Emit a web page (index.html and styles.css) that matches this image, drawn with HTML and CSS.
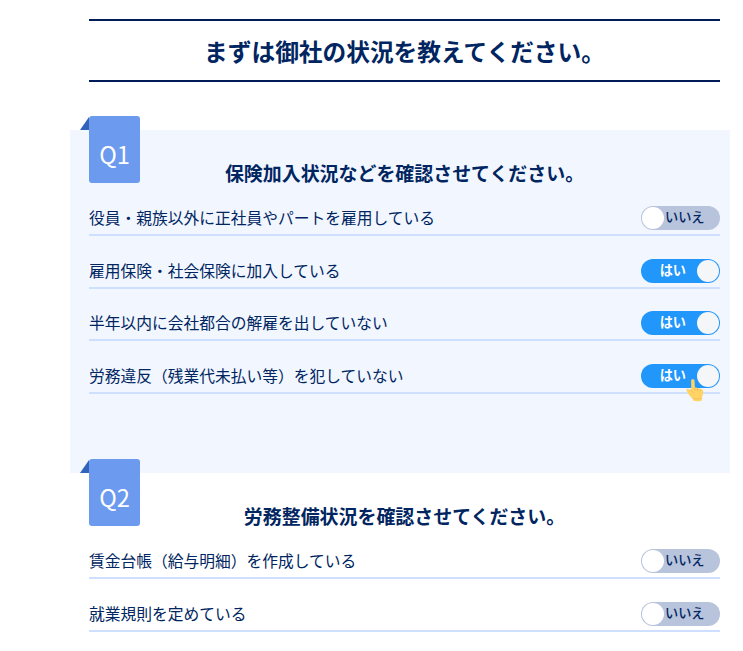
FILE: index.html
```html
<!DOCTYPE html>
<html lang="ja">
<head>
    <meta charset="UTF-8">
    <meta name="viewport" content="width=device-width, initial-scale=1.0">
    <title>御社の状況確認</title>
    <link rel="stylesheet" href="styles.css">
</head>
<body>

    <main class="container">
        <h1 class="page-title">まずは御社の状況を教えてください。</h1>

        <section class="question question-tinted">
            <div class="label"><span>Q1</span></div>
            <h2>保険加入状況などを確認させてください。</h2>
            <ul class="list">
                <li>
                    <p>役員・親族以外に正社員やパートを雇用している</p>
                    <div class="toggle"><span>いいえ</span></div>
                </li>
                <li>
                    <p>雇用保険・社会保険に加入している</p>
                    <div class="toggle on"><span>はい</span></div>
                </li>
                <li>
                    <p>半年以内に会社都合の解雇を出していない</p>
                    <div class="toggle on"><span>はい</span></div>
                </li>
                <li>
                    <p>労務違反（残業代未払い等）を犯していない</p>
                    <div class="toggle on"><span>はい</span>
                        <svg class="pointer" width="19" height="24" viewBox="0 0 19 24">
                            <path fill="#ffd465" d="M5.200 2.200C5.200.9 8.400.9 8.500 2.200l.4 7.400 2 .2.500.500 2 .1.500.600 1.700.2c1.200.4 1.600 1.200 1.600 2.400 0 2-.1 4-1.400 5.600v3.200c-2.800 1.100-6 1.100-8.800.1l-.2-2C4.200 18.700 1.500 15.500.500 12.500c-.4-1.500.9-2.200 2.200-1.500l2.500 1.500z"/>
                            <path fill="none" stroke="#f2b65b" stroke-width=".8" stroke-linecap="round" d="M8.900 9.600v3M11.500 10.300v2.500M14 11v2M4.800 11.500c.4 1.600 1.300 2.700 2.700 3.300M6.800 20.300c3 1 6 1 9-.2"/>
                        </svg>
                    </div>
                </li>
            </ul>
        </section>

        <section class="question">
            <div class="label"><span>Q2</span></div>
            <h2>労務整備状況を確認させてください。</h2>
            <ul class="list">
                <li>
                    <p>賃金台帳（給与明細）を作成している</p>
                    <div class="toggle"><span>いいえ</span></div>
                </li>
                <li>
                    <p>就業規則を定めている</p>
                    <div class="toggle"><span>いいえ</span></div>
                </li>
            </ul>
        </section>
    </main>

</body>
</html>
```
FILE: styles.css
```css
* {
    box-sizing: border-box;
}

body {
    margin: 0;
    background-color: #fff;
    color: #002561;
    font-family: "Noto Sans CJK JP", sans-serif;
    font-size: 15.75px;
}

.container {
    width: 660px;
    margin-left: 70px;
    padding-top: 19px;
}

.page-title {
    height: 63px;
    margin: 0 10px 47.5px 19px;
    border-top: 2px solid #001c58;
    border-bottom: 2px solid #001c58;
    font-size: 23.7px;
    font-weight: 700;
    line-height: 61px;
    text-align: center;
}

/* Question block */
.question {
    position: relative;
    padding: 29px 10px 0 19px;
}

.question-tinted {
    height: 343px;
    background-color: #f1f6ff;
}

.question h2 {
    margin: 0;
    font-size: 18.95px;
    font-weight: 700;
    line-height: 28px;
    text-align: center;
}

/* Ribbon label */
.label {
    position: absolute;
    top: -13.5px;
    left: 19px;
    width: 51px;
    height: 66.5px;
    border-radius: 3px;
    background-color: #6b9aef;
    color: #fff;
    font-size: 23.7px;
    line-height: 77px;
    text-align: center;
}

.label::before {
    content: "";
    position: absolute;
    top: 1px;
    left: -9px;
    border-left: 9px solid transparent;
    border-bottom: 13.5px solid #3263bb;
}

.list {
    margin: 0;
    padding: 0;
    list-style: none;
}

.list li {
    display: flex;
    justify-content: space-between;
    align-items: flex-end;
    height: 52.8px;
    padding-bottom: 4px;
    border-bottom: 2px solid #cfdfff;
}

.list li:first-child {
    height: 49.4px;
}

.list p {
    margin: 0;
    line-height: 24px;
}

/* Toggle */
.toggle {
    display: flex;
    position: relative;
    align-items: center;
    width: 79px;
    height: 24px;
    padding: 0 1px;
    border-radius: 12px;
    background-color: #b8c3dc;
    font-size: 13.2px;
    font-weight: 500;
    line-height: 22px;
}

.toggle::before {
    content: "";
    width: 22px;
    height: 22px;
    border-radius: 50%;
    background-color: #fff;
}

.toggle span {
    margin-left: 1px;
    padding-bottom: 2px;
}

.toggle.on {
    flex-direction: row-reverse;
    background-color: #2196fb;
    color: #fff;
    font-weight: 700;
}

.toggle.on::before {
    background-color: #f5f6f8;
}

.toggle.on span {
    margin-right: 11px;
}

.pointer {
    position: absolute;
    top: 14px;
    left: 45px;
}
```
